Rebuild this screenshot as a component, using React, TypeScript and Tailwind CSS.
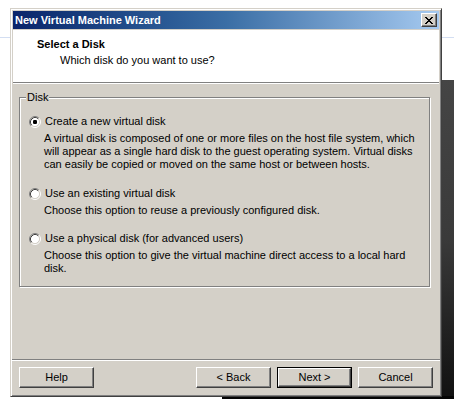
import React from 'react';

const font = 'font-["Liberation_Sans",Arial,sans-serif]';

const Radio: React.FC<{ checked?: boolean }> = ({ checked }) => (
  <svg width="12" height="12" viewBox="0 0 12 12" className="shrink-0">
    <circle cx="6" cy="6" r="4.5" fill="#fff" />
    <path d="M2.11 9.89 A5.5 5.5 0 0 1 9.89 2.11" fill="none" stroke="#808080" />
    <path d="M9.89 2.11 A5.5 5.5 0 0 1 2.11 9.89" fill="none" stroke="#fff" />
    <path d="M2.82 9.18 A4.5 4.5 0 0 1 9.18 2.82" fill="none" stroke="#404040" />
    <path d="M9.18 2.82 A4.5 4.5 0 0 1 2.82 9.18" fill="none" stroke="#d4d0c8" />
    {checked && <rect x="4" y="4" width="4" height="4" rx="1.2" fill="#000" />}
  </svg>
);

const Option: React.FC<{ label: string; lines: string[]; checked?: boolean; className?: string }> = ({
  label,
  lines,
  checked,
  className,
}) => (
  <div className={className}>
    <div className="flex items-center h-[13px] pl-[9px] gap-[4px]">
      <Radio checked={checked} />
      <span>{label}</span>
    </div>
    <div className="mt-[4px] pl-[24px]">
      {lines.map((l) => (
        <div key={l} className="h-[13px] whitespace-nowrap">
          {l}
        </div>
      ))}
    </div>
  </div>
);

const Button: React.FC<{ label: string; isDefault?: boolean }> = ({ label, isDefault }) => (
  <button
    className={
      isDefault
        ? 'w-[75px] h-[21px] border border-black bg-[#d4d0c8] p-0 text-black text-[11px] leading-[13px]'
        : 'w-[75px] h-[21px] border border-t-white border-l-white border-b-[#404040] border-r-[#404040] bg-[#d4d0c8] text-black text-[11px] leading-[13px] shadow-[inset_-1px_-1px_0_#808080]'
    }
  >
    {isDefault ? (
      <span className="flex w-full h-full items-center justify-center border border-t-white border-l-white border-b-[#404040] border-r-[#404040] shadow-[inset_-1px_-1px_0_#808080]">
        {label}
      </span>
    ) : (
      label
    )}
  </button>
);

export default function App() {
  return (
    <div className={`relative w-[454px] h-[399px] bg-white overflow-hidden ${font} text-[11px] leading-[13px] text-black`}>
      {/* desktop behind the window */}
      <div className="absolute left-0 top-[37px] w-[10px] h-px bg-[#d3def2]" />
      <div className="absolute left-[442px] top-[37px] w-[12px] h-px bg-[#d3def2]" />
      <div className="absolute left-[442px] top-[80px] w-[12px] h-[319px] bg-gradient-to-b from-[#454545] via-[#3a3a3a] to-[#111]" />
      <div className="absolute left-[222px] top-[396px] w-[232px] h-[3px] bg-[#050505]" />

      <div className="relative ml-[10px] mt-[8px] w-[432px] h-[389px] bg-[#d4d0c8] border border-t-[#d4d0c8] border-l-[#d4d0c8] border-b-[#404040] border-r-[#404040] shadow-[inset_1px_1px_0_#fff,inset_-1px_-1px_0_#808080] p-[2px] flex flex-col">
        {/* title bar */}
        <div className="h-[18px] flex items-center justify-between pl-[2px] pr-[2px] bg-gradient-to-r from-[#0a246a] via-[#3a6ea5] to-[#a6caf0]">
          <span className="font-bold text-white">New Virtual Machine Wizard</span>
          <button className="w-[16px] h-[14px] flex items-center justify-center bg-[#d4d0c8] border border-t-white border-l-white border-b-[#404040] border-r-[#404040] shadow-[inset_-1px_-1px_0_#808080] p-0">
            <svg width="8" height="7" viewBox="0 0 8 7">
              <path d="M0 0h2v1h-2zM6 0h2v1h-2zM1 1h2v1h-2zM5 1h2v1h-2zM2 2h4v1h-4zM3 3h2v1h-2zM2 4h4v1h-4zM1 5h2v1h-2zM5 5h2v1h-2zM0 6h2v1h-2zM6 6h2v1h-2z" fill="#000" />
            </svg>
          </button>
        </div>

        {/* header */}
        <div className="mt-px h-[53px] bg-white border-b border-[#808080] pt-[8px] pl-[24px]">
          <div className="font-bold h-[13px]">Select a Disk</div>
          <div className="mt-[3px] pl-[23px] h-[13px]">Which disk do you want to use?</div>
        </div>
        <div className="h-px bg-white" />

        {/* group box */}
        <div className="relative mt-[13px] ml-[6px] w-[411px] h-[190px] border border-[#808080] shadow-[inset_1px_1px_0_#fff,1px_1px_0_#fff] pt-[17px]">
          <span className="absolute -top-[7px] left-[6px] px-[1px] bg-[#d4d0c8] leading-[13px]">Disk</span>
          <Option
            checked
            label="Create a new virtual disk"
            lines={[
              'A virtual disk is composed of one or more files on the host file system, which',
              'will appear as a single hard disk to the guest operating system. Virtual disks',
              'can easily be copied or moved on the same host or between hosts.',
            ]}
          />
          <Option
            className="mt-[16px]"
            label="Use an existing virtual disk"
            lines={['Choose this option to reuse a previously configured disk.']}
          />
          <Option
            className="mt-[15px]"
            label="Use a physical disk (for advanced users)"
            lines={[
              'Choose this option to give the virtual machine direct access to a local hard',
              'disk.',
            ]}
          />
        </div>

        {/* footer */}
        <div className="flex-1" />
        <div className="-mx-px h-px bg-[#808080]" />
        <div className="-mx-px h-px bg-white" />
        <div className="flex items-center mt-[6px] mb-[6px] pl-[6px] pr-[6px]">
          <Button label="Help" />
          <div className="flex-1" />
          <div className="flex gap-[6px]">
            <Button label="< Back" />
            <Button label="Next >" isDefault />
            <Button label="Cancel" />
          </div>
        </div>
      </div>
    </div>
  );
}
